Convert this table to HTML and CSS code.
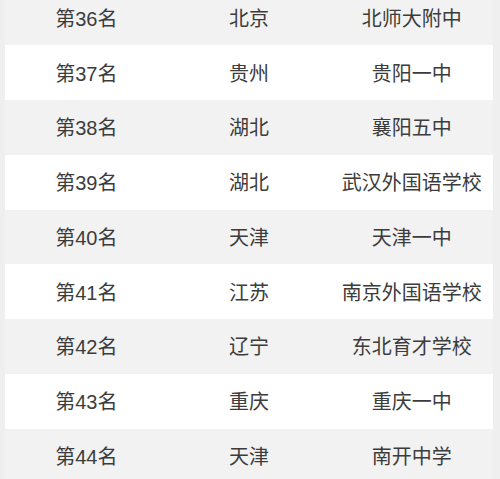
FILE: index.html
```html
<!DOCTYPE html>
<html lang="zh">
<head>
<meta charset="utf-8">
<link rel="stylesheet" href="styles.css">
</head>
<body>
<div class="table">
  <div class="row gray"><span>第36名</span><span>北京</span><span>北师大附中</span></div>
  <div class="row white"><span>第37名</span><span>贵州</span><span>贵阳一中</span></div>
  <div class="row gray"><span>第38名</span><span>湖北</span><span>襄阳五中</span></div>
  <div class="row white"><span>第39名</span><span>湖北</span><span>武汉外国语学校</span></div>
  <div class="row gray"><span>第40名</span><span>天津</span><span>天津一中</span></div>
  <div class="row white"><span>第41名</span><span>江苏</span><span>南京外国语学校</span></div>
  <div class="row gray"><span>第42名</span><span>辽宁</span><span>东北育才学校</span></div>
  <div class="row white"><span>第43名</span><span>重庆</span><span>重庆一中</span></div>
  <div class="row gray"><span>第44名</span><span>天津</span><span>南开中学</span></div>
</div>
</body>
</html>
```

FILE: styles.css
```css
html, body {
  margin: 0;
  padding: 0;
  background: #efefef;
  overflow: hidden;
}
body {
  width: 500px;
  height: 479px;
}
.table {
  margin: -9.5px 7px 0 5px;
  display: flex;
  flex-direction: column;
  font-family: "Liberation Sans", "Noto Sans CJK SC", sans-serif;
  font-size: 20px;
  color: #3c3c3c;
}
.row {
  height: 54.75px;
  display: grid;
  grid-template-columns: 1fr 1fr 1fr;
  align-items: center;
  justify-items: center;
}
.row span {
  line-height: 1;
  padding-top: 2px;
}
.gray { background: #f2f2f2; }
.white { background: #ffffff; }
```
